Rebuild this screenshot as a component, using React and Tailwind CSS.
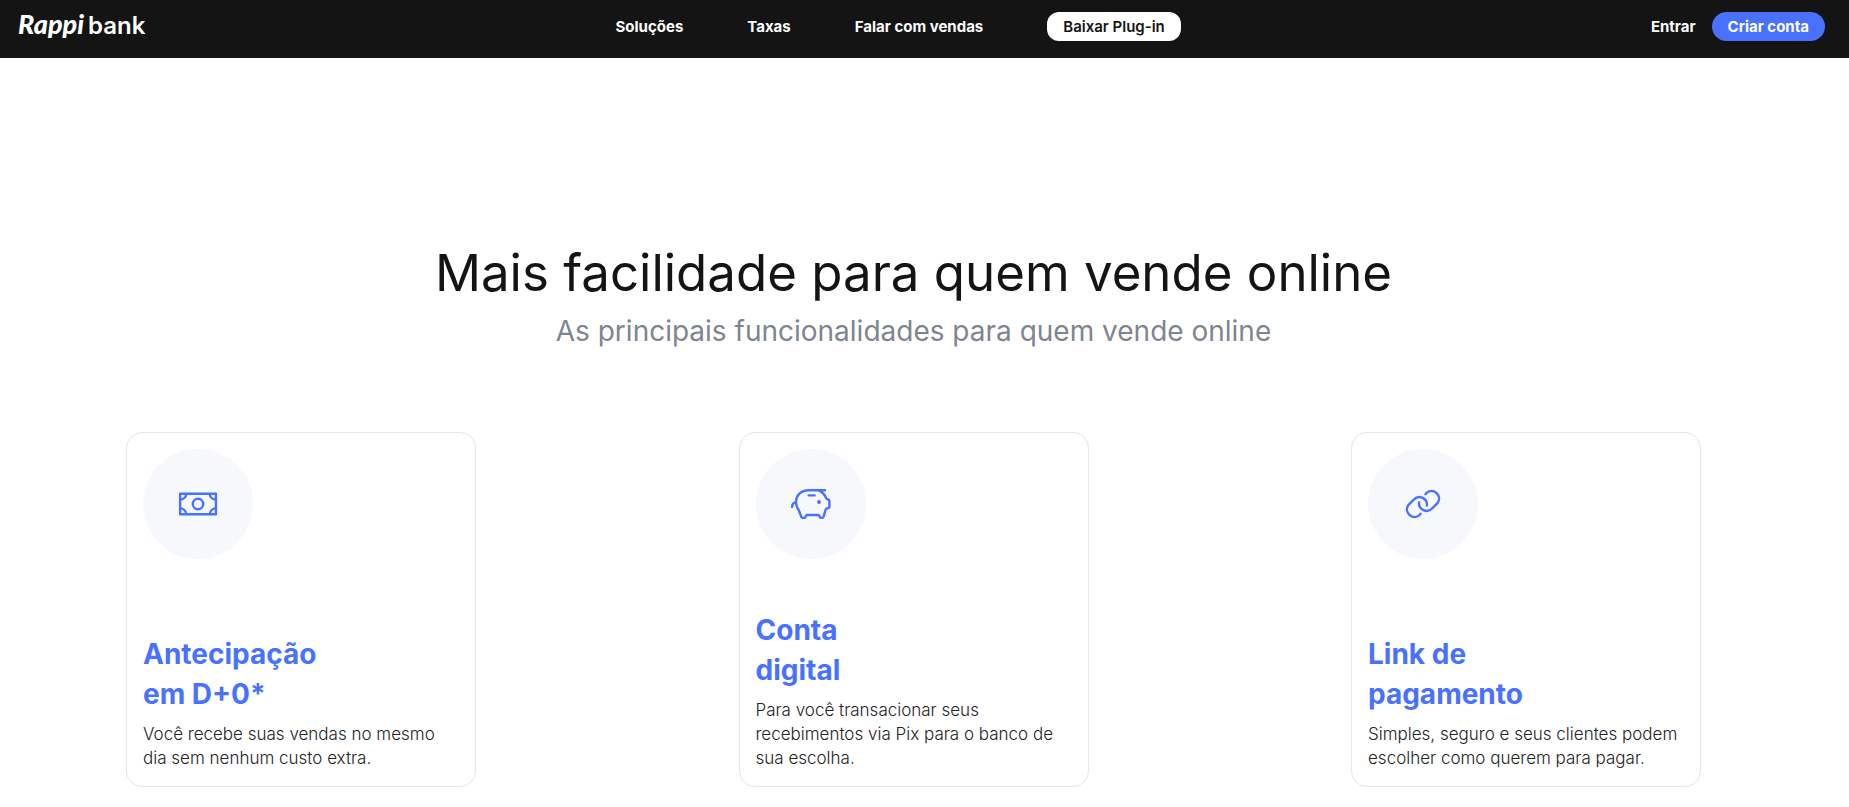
import React from 'react';

const MoneyIcon = () => (
    <svg viewBox="0 0 40 40" className="w-10 h-10" fill="none" stroke="currentColor" strokeWidth="2.4" strokeLinejoin="round" aria-hidden="true">
        <rect x="2.1" y="9.8" width="35.8" height="20.4" />
        <circle cx="20" cy="20" r="5.2" />
        <path d="M2.1 15.6A6.4 6.4 0 0 0 8.3 9.8M31.7 9.8A6.4 6.4 0 0 0 37.9 15.6M2.1 24.4A6.4 6.4 0 0 1 8.3 30.2M31.7 30.2A6.4 6.4 0 0 1 37.9 24.4" />
    </svg>
);

const PiggyIcon = () => (
    <svg viewBox="0 0 40 40" className="w-10 h-10" fill="none" stroke="currentColor" strokeWidth="2.4" strokeLinecap="round" strokeLinejoin="round" aria-hidden="true">
        <path d="M34 6.2H17.5C10 6.2 5 11.5 5 18.3C5 21.5 6 24 7.7 26L10 32.2C10.3 33.4 10.8 33.9 11.8 33.9H13.3C14.8 33.9 14.6 31 16 31H27.3C28.7 31 28.5 33.9 30 33.9H31C32 33.9 32.4 33.4 32.7 32.4L34.5 26C34.9 24.6 35.3 24.2 36.6 24.2C37.9 24.2 38.4 23.8 38.4 22.6V17.2C38.4 16 37.9 15.6 36.8 15.5C35.8 15.4 35.3 14.8 34.9 13.7C33.8 10.7 31.4 8 27.5 6.4" />
        <path d="M4.4 18.4C2.2 18.8 1.2 20.4 1.1 22.9M17.7 11.4H23.6" />
        <circle cx="28" cy="18" r="1.9" fill="currentColor" stroke="none" />
    </svg>
);

const LinkIcon = () => (
    <svg viewBox="0 0 40 40" className="w-10 h-10" fill="none" stroke="currentColor" strokeWidth="2.4" strokeLinecap="round" aria-hidden="true">
        <path d="M17.6 29.8L16.2 31.4A7.6 7.6 0 0 1 5.3 21.1L10.9 15.5A7.6 7.6 0 0 1 23.9 21.6" />
        <path d="M17.6 29.8L16.2 31.4A7.6 7.6 0 0 1 5.3 21.1L10.9 15.5A7.6 7.6 0 0 1 23.9 21.6" transform="rotate(180 20 20)" />
    </svg>
);

const navLinks = ['Soluções', 'Taxas', 'Falar com vendas'];

const features = [
    {
        icon: MoneyIcon,
        title: ['Antecipação', 'em D+0*'],
        text: ['Você recebe suas vendas no mesmo', 'dia sem nenhum custo extra.'],
    },
    {
        icon: PiggyIcon,
        title: ['Conta', 'digital'],
        text: ['Para você transacionar seus', 'recebimentos via Pix para o banco de', 'sua escolha.'],
    },
    {
        icon: LinkIcon,
        title: ['Link de', 'pagamento'],
        text: ['Simples, seguro e seus clientes podem', 'escolher como querem para pagar.'],
    },
];

const Header = () => (
    <header className="flex items-start justify-between bg-[#141414] pt-3 pb-[17px] pl-[18px] pr-6 text-[15px] font-bold text-white">
        <a href="#" className="flex h-[29px] items-baseline gap-1 leading-6">
            <span className="font-['Lato',sans-serif] text-[27px] font-black italic">Rappi</span>
            <span className="text-2xl leading-6 font-semibold">bank</span>
        </a>
        <nav className="flex h-[29px] items-center gap-16 leading-7">
            {navLinks.map((label) => (
                <a key={label} href="#">{label}</a>
            ))}
            <button className="h-[29px] rounded-xl bg-white px-4 font-semibold text-[#141414]">Baixar Plug-in</button>
        </nav>
        <div className="flex h-[29px] items-center gap-4 leading-7">
            <a href="#">Entrar</a>
            <button className="h-[29px] rounded-full bg-[#4871ff] px-4">Criar conta</button>
        </div>
    </header>
);

const FeatureCard = ({ icon: Icon, title, text }) => (
    <article className="flex min-h-[355px] w-[350px] flex-col justify-between rounded-2xl border border-[#e6e6e6] p-4">
        <div className="flex h-[110px] w-[110px] items-center justify-center rounded-full bg-[#f7f8fc] text-[#4871ff]">
            <Icon />
        </div>
        <div>
            <h3 className="mb-2 text-[28px] leading-10 font-bold text-[#4871ff]">
                {title.map((line) => (
                    <span key={line} className="block">{line}</span>
                ))}
            </h3>
            <p className="text-[17px] leading-6 font-light text-[#242424]">
                {text.map((line) => (
                    <span key={line} className="block whitespace-nowrap">{line}</span>
                ))}
            </p>
        </div>
    </article>
);

const App = () => {
    return (
        <div className="bg-white font-['Inter',sans-serif]">
            <Header />
            <main className="pt-[179px] pb-5 pr-[22px]">
                <h1 className="text-center text-[51px] leading-[72px] font-normal text-[#141414]">Mais facilidade para quem vende online</h1>
                <h2 className="mt-0.5 text-center text-[28px] leading-10 text-[#7f858f]">As principais funcionalidades para quem vende online</h2>
                <section className="mt-[81px] flex flex-wrap justify-between gap-6 px-[126px]">
                    {features.map((feature) => (
                        <FeatureCard key={feature.title[0]} {...feature} />
                    ))}
                </section>
            </main>
        </div>
    );
};

export default App;
